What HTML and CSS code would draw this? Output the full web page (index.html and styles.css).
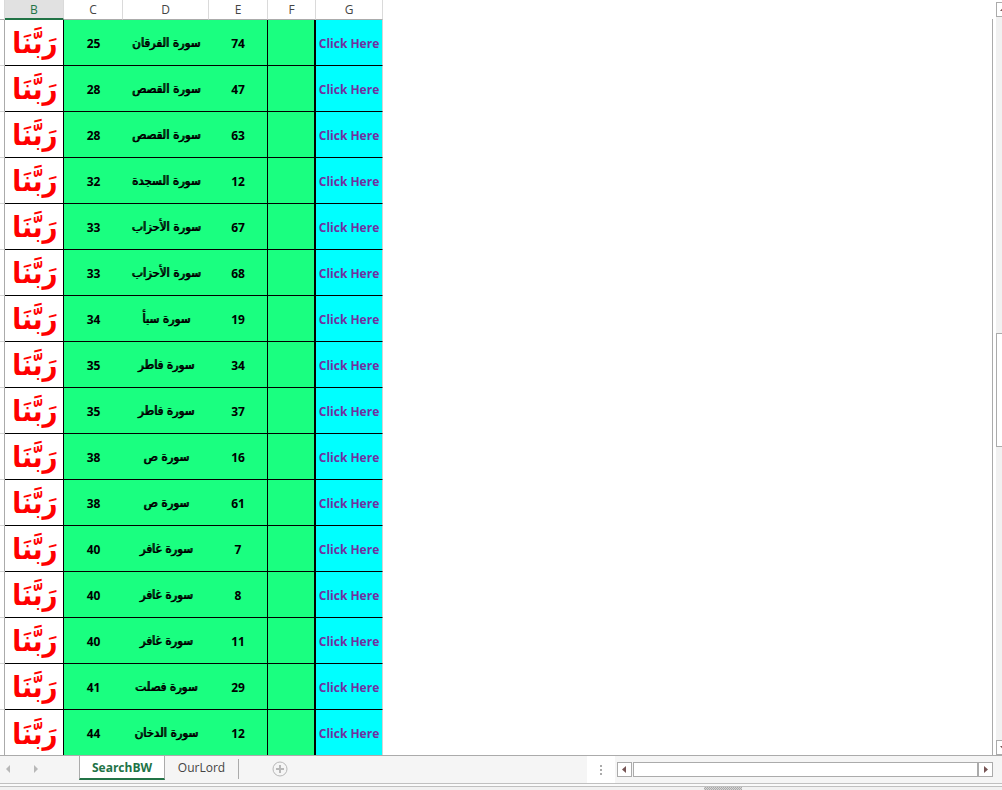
FILE: index.html
```html
<!DOCTYPE html>
<html lang="en">
<head>
<meta charset="utf-8">
<title>SearchBW</title>
<link rel="stylesheet" href="styles.css">
</head>
<body>
<div class="workbook">
  <div class="view">
    <main class="sheet">
      <table class="grid">
        <colgroup><col class="w-edge"><col class="w-b"><col class="w-c"><col class="w-d"><col class="w-e"><col class="w-f"><col class="w-g"></colgroup>
        <thead><tr><th></th><th class="selected">B</th><th>C</th><th>D</th><th>E</th><th>F</th><th>G</th></tr></thead>
        <tbody>
          <tr><td></td><td lang="ar" dir="rtl">رَبَّنَا</td><td>25</td><td lang="ar" dir="rtl">سورة الفرقان</td><td>74</td><td></td><td><a href="#r1">Click Here</a></td></tr>
          <tr><td></td><td lang="ar" dir="rtl">رَبَّنَا</td><td>28</td><td lang="ar" dir="rtl">سورة القصص</td><td>47</td><td></td><td><a href="#r2">Click Here</a></td></tr>
          <tr><td></td><td lang="ar" dir="rtl">رَبَّنَا</td><td>28</td><td lang="ar" dir="rtl">سورة القصص</td><td>63</td><td></td><td><a href="#r3">Click Here</a></td></tr>
          <tr><td></td><td lang="ar" dir="rtl">رَبَّنَا</td><td>32</td><td lang="ar" dir="rtl">سورة السجدة</td><td>12</td><td></td><td><a href="#r4">Click Here</a></td></tr>
          <tr><td></td><td lang="ar" dir="rtl">رَبَّنَا</td><td>33</td><td lang="ar" dir="rtl">سورة الأحزاب</td><td>67</td><td></td><td><a href="#r5">Click Here</a></td></tr>
          <tr><td></td><td lang="ar" dir="rtl">رَبَّنَا</td><td>33</td><td lang="ar" dir="rtl">سورة الأحزاب</td><td>68</td><td></td><td><a href="#r6">Click Here</a></td></tr>
          <tr><td></td><td lang="ar" dir="rtl">رَبَّنَا</td><td>34</td><td lang="ar" dir="rtl">سورة سبأ</td><td>19</td><td></td><td><a href="#r7">Click Here</a></td></tr>
          <tr><td></td><td lang="ar" dir="rtl">رَبَّنَا</td><td>35</td><td lang="ar" dir="rtl">سورة فاطر</td><td>34</td><td></td><td><a href="#r8">Click Here</a></td></tr>
          <tr><td></td><td lang="ar" dir="rtl">رَبَّنَا</td><td>35</td><td lang="ar" dir="rtl">سورة فاطر</td><td>37</td><td></td><td><a href="#r9">Click Here</a></td></tr>
          <tr><td></td><td lang="ar" dir="rtl">رَبَّنَا</td><td>38</td><td lang="ar" dir="rtl">سورة ص</td><td>16</td><td></td><td><a href="#r10">Click Here</a></td></tr>
          <tr><td></td><td lang="ar" dir="rtl">رَبَّنَا</td><td>38</td><td lang="ar" dir="rtl">سورة ص</td><td>61</td><td></td><td><a href="#r11">Click Here</a></td></tr>
          <tr><td></td><td lang="ar" dir="rtl">رَبَّنَا</td><td>40</td><td lang="ar" dir="rtl">سورة غافر</td><td>7</td><td></td><td><a href="#r12">Click Here</a></td></tr>
          <tr><td></td><td lang="ar" dir="rtl">رَبَّنَا</td><td>40</td><td lang="ar" dir="rtl">سورة غافر</td><td>8</td><td></td><td><a href="#r13">Click Here</a></td></tr>
          <tr><td></td><td lang="ar" dir="rtl">رَبَّنَا</td><td>40</td><td lang="ar" dir="rtl">سورة غافر</td><td>11</td><td></td><td><a href="#r14">Click Here</a></td></tr>
          <tr><td></td><td lang="ar" dir="rtl">رَبَّنَا</td><td>41</td><td lang="ar" dir="rtl">سورة فصلت</td><td>29</td><td></td><td><a href="#r15">Click Here</a></td></tr>
          <tr><td></td><td lang="ar" dir="rtl">رَبَّنَا</td><td>44</td><td lang="ar" dir="rtl">سورة الدخان</td><td>12</td><td></td><td><a href="#r16">Click Here</a></td></tr>
        </tbody>
      </table>
      <div class="blank"></div>
    </main>
    <div class="vscroll">
      <button class="sbtn" aria-label="Scroll up"><svg width="13" height="13"><path d="M3 8h7L6.500 4z"/></svg></button>
      <div class="vtrack"><div class="vthumb"></div></div>
      <button class="sbtn" aria-label="Scroll down"><svg width="13" height="13"><path d="M3 5h7L6.500 9z"/></svg></button>
    </div>
  </div>
  <footer class="bar">
    <nav class="tabs">
      <button class="arrow" aria-label="Previous sheet"><svg width="6" height="8"><path d="M5 0v8L1 4z"/></svg></button>
      <button class="arrow" aria-label="Next sheet"><svg width="6" height="8"><path d="M1 0v8l4-4z"/></svg></button>
      <button class="tab active">SearchBW</button>
      <button class="tab">OurLord</button>
      <span class="divider"></span>
      <button class="add" aria-label="New sheet"><svg width="16" height="16"><circle cx="8" cy="8" r="7"/><path d="M8 4v8M4 8h8"/></svg></button>
    </nav>
    <div class="grip"><svg width="2" height="10"><path d="M0 0h2v2H0zM0 4h2v2H0zM0 8h2v2H0z"/></svg></div>
    <div class="hscroll">
      <button class="sbtn" aria-label="Scroll left"><svg width="13" height="13"><path d="M8 3v7L4 6.500z"/></svg></button>
      <div class="hthumb"></div>
      <button class="sbtn" aria-label="Scroll right"><svg width="13" height="13"><path d="M5 3v7L9 6.500z"/></svg></button>
    </div>
  </footer>
  <div class="status"><div class="hatch"></div></div>
</div>
</body>
</html>
```
FILE: styles.css
```css
* { box-sizing: border-box; }
body { margin: 0; background: #fff; }
button { margin: 0; padding: 0; border: 0; background: none; font: inherit; color: inherit; }
svg { display: block; }
.workbook { display: flex; flex-direction: column; height: 100vh; overflow: hidden; }
.view { display: flex; flex: 1; min-height: 0; }
.sheet { display: flex; align-items: stretch; flex: 1; min-width: 0; overflow: hidden; }
.blank { flex: 1; margin-top: 19px; border-right: 1px solid #ababab; }

.grid { flex: none; align-self: flex-start; width: 383px; table-layout: fixed; border-collapse: separate; border-spacing: 0; }
.w-edge { width: 5px; }
.w-b, .w-c, .w-e { width: 59px; }
.w-d { width: 86px; }
.w-f { width: 48px; }
.w-g { width: 67px; }
.grid th { height: 20px; padding: 0; border-right: 1px solid #dadada; border-bottom: 1px solid #ababab; font: 12px/18px "Open Sans", sans-serif; color: #444; }
.grid th.selected { background: #e1e1e1; border-bottom: 2px solid #217346; color: #217346; line-height: 17px; }
.grid td { height: 46px; padding: 2px 0 0; border-bottom: 1px solid #000; background: #1aff80; text-align: center; vertical-align: middle; font: bold 12px/20px "Open Sans", sans-serif; white-space: nowrap; color: #000; }
.grid td:nth-child(1) { background: #fff; border-right: 1px solid #ababab; border-bottom-color: #d4d4d4; }
.grid td:nth-child(2) { padding: 1px 0 0; background: #fff; border-right: 1px solid #000; color: #f00; font: bold 29px/44px "DejaVu Sans Condensed", "DejaVu Sans", sans-serif; }
.grid td:nth-child(4) { padding: 0; font: 13px/20px "DejaVu Sans Condensed", "DejaVu Sans", sans-serif; text-shadow: 1px 0 0 #000; }
.grid td:nth-child(5) { border-right: 1px solid #000; }
.grid td:nth-child(6) { border-right: 2px solid #000; }
.grid td:nth-child(7) { background: #0ff; border-right: 1px solid #d4d4d4; }
.grid tr:last-child td { border-bottom: 0; }
.grid a { color: #7030a0; text-decoration: none; }

.vscroll { display: flex; flex-direction: column; flex: none; width: 9px; padding: 2px 0 0 3px; overflow: hidden; }
.sbtn { flex: none; width: 15px; height: 15px; border: 1px solid #ababab; background: #fff; }
.sbtn path { fill: #775555; }
.vtrack { flex: 1; padding-top: 316px; background: #f1f1f1; }
.vthumb { width: 15px; height: 114px; border: 1px solid #ababab; background: #fff; }

.bar { display: flex; flex: none; height: 29px; border-top: 1px solid #ababab; border-bottom: 1px solid #c0c0c0; background: #f5f5f5; }
.tabs { display: flex; flex: 1; align-items: flex-start; padding-left: 4px; font: 12px/24px "Open Sans", sans-serif; color: #444; }
.arrow { width: 28px; height: 26px; padding-left: 1px; }
.arrow path { fill: #b8b8b8; }
.arrow + .tab { margin-left: 19px; }
.tab { width: 73px; height: 24px; }
.tab.active { width: 86px; border: 1px solid #ababab; border-width: 0 1px 2px; border-bottom-color: #217346; background: #fff; color: #217346; font-weight: bold; }
.divider { width: 1px; height: 20px; margin-top: 3px; background: #ababab; }
.add { margin: 5px 0 0 33px; }
.add circle, .add path { fill: none; stroke: #b8b8b8; }
.add path { stroke-width: 2; }
.grip { display: flex; align-items: center; justify-content: center; width: 28px; background: #fff; }
.grip path { fill: #ababab; }
.hscroll { display: flex; align-items: center; flex: none; width: 38.600%; padding: 0 9px 0 2px; }
.hthumb { flex: 1; height: 15px; margin-left: 1px; border: 1px solid #ababab; background: #fff; }
.status { flex: none; height: 6px; padding-top: 3px; background: linear-gradient(#fafafa 2px, #c0c0c0 2px, #c0c0c0 3px, #f1f1f1 3px); }
.hatch { width: 38px; height: 3px; margin-left: 704px; background: repeating-conic-gradient(#ababab 0 25%, #d4d4d4 0 50%) 0 0 / 2px 2px; }
```
